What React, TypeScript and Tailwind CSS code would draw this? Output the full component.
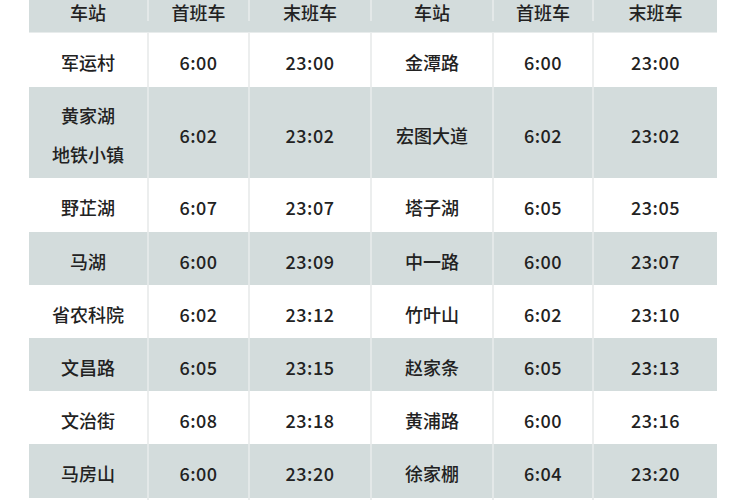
import React from "react";

type Row = { a: string[]; a1: string; a2: string; b: string; b1: string; b2: string; h: string };

const rows: Row[] = [
  { a: ["军运村"], a1: "6:00", a2: "23:00", b: "金潭路", b1: "6:00", b2: "23:00", h: "h-[54px]" },
  { a: ["黄家湖", "地铁小镇"], a1: "6:02", a2: "23:02", b: "宏图大道", b1: "6:02", b2: "23:02", h: "h-[91px]" },
  { a: ["野芷湖"], a1: "6:07", a2: "23:07", b: "塔子湖", b1: "6:05", b2: "23:05", h: "h-[54px]" },
  { a: ["马湖"], a1: "6:00", a2: "23:09", b: "中一路", b1: "6:00", b2: "23:07", h: "h-[53px]" },
  { a: ["省农科院"], a1: "6:02", a2: "23:12", b: "竹叶山", b1: "6:02", b2: "23:10", h: "h-[53px]" },
  { a: ["文昌路"], a1: "6:05", a2: "23:15", b: "赵家条", b1: "6:05", b2: "23:13", h: "h-[53px]" },
  { a: ["文治街"], a1: "6:08", a2: "23:18", b: "黄浦路", b1: "6:00", b2: "23:16", h: "h-[53px]" },
  { a: ["马房山"], a1: "6:00", a2: "23:20", b: "徐家棚", b1: "6:04", b2: "23:20", h: "h-[54px]" },
  { a: [""], a1: "", a2: "", b: "", b1: "", b2: "", h: "h-[53px]" },
];

const cols = "grid grid-cols-[120px_101px_122px_122px_100px_123px]";

function Cell({ children, gray, last, head }: { children: React.ReactNode; gray: boolean; last?: boolean; head?: boolean }) {
  return (
    <div
      className={`flex flex-col items-center justify-center ${head ? "pt-[3px]" : "pt-[4px]"} ${last ? "" : gray ? "border-r-2 border-[#e3e8e8]" : "border-r-2 border-[#eceeee]"}`}
    >
      {children}
    </div>
  );
}

export default function App() {
  return (
    <div
      className="w-[750px] h-[500px] overflow-hidden bg-white pl-[29px] text-[#222] text-[18px] font-medium"
      style={{ fontFamily: '"Noto Sans CJK SC", "Noto Sans", sans-serif' }}
    >
      <div className="w-[688px]">
        <div className={`${cols} h-[33px] items-start bg-[#d3dcdc] border-b border-[#e8ecec]`}>
          {["车站", "首班车", "末班车", "车站", "首班车", "末班车"].map((t, i) => (
            <Cell key={i} gray head last={i === 5}>
              <span className="leading-[18px]">{t}</span>
            </Cell>
          ))}
        </div>
        {rows.map((r, i) => {
          const gray = i % 2 === 1;
          return (
            <div key={i} className={`${cols} ${r.h} ${gray ? "bg-[#d3dcdc]" : "bg-white"}`}>
              <Cell gray={gray}>
                {r.a.map((l, j) => (
                  <span key={j} className={r.a.length > 1 ? "leading-[39px]" : "leading-[22px]"}>
                    {l}
                  </span>
                ))}
              </Cell>
              <Cell gray={gray}>
                <span className="leading-[22px] tracking-[0.5px]">{r.a1}</span>
              </Cell>
              <Cell gray={gray}>
                <span className="leading-[22px] tracking-[0.5px]">{r.a2}</span>
              </Cell>
              <Cell gray={gray}>
                <span className="leading-[22px]">{r.b}</span>
              </Cell>
              <Cell gray={gray}>
                <span className="leading-[22px] tracking-[0.5px]">{r.b1}</span>
              </Cell>
              <Cell gray={gray} last>
                <span className="leading-[22px] tracking-[0.5px]">{r.b2}</span>
              </Cell>
            </div>
          );
        })}
      </div>
    </div>
  );
}
